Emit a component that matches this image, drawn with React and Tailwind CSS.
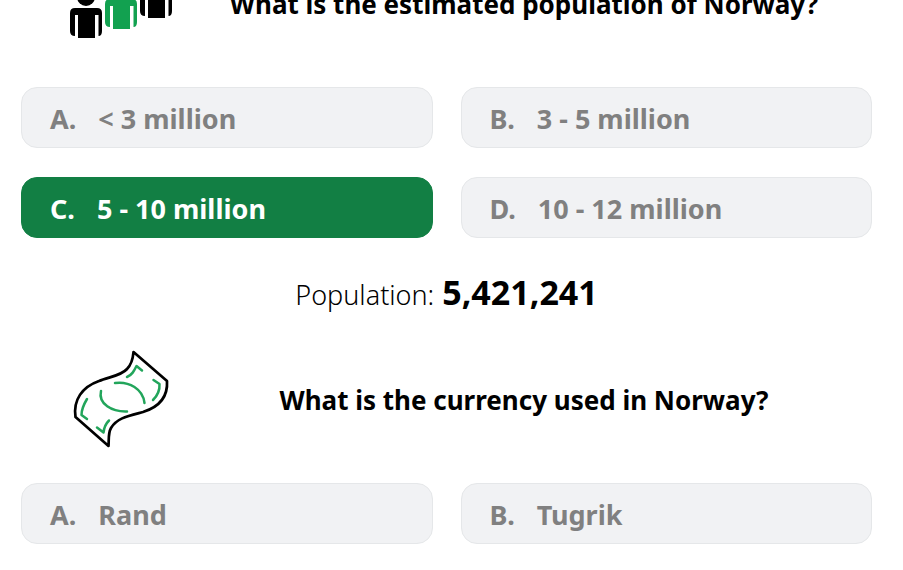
function Person({ x, y, color }) {
  return (
    <g transform={`translate(${x} ${y})`} fill={color}>
      <circle cx="16" cy="-11" r="9" />
      <path d="M5 0H27Q32 0 32 5V23Q32 28 28.500 28V7H25V30H8V7H5V28Q0 28 0 23V5Q0 0 5 0Z" />
    </g>
  );
}

function PeopleIcon() {
  return (
    <svg viewBox="0 0 104 100" className="h-[100px] w-[104px]" aria-hidden="true">
      <Person x={0} y={54} color="#000000" />
      <Person x={35} y={45} color="#12a150" />
      <Person x={70} y={34} color="#000000" />
    </svg>
  );
}

function BanknoteIcon() {
  return (
    <svg viewBox="0 0 104 100" className="h-[100px] w-[104px]" fill="none" strokeWidth="2.700" strokeLinecap="round" strokeLinejoin="round" aria-hidden="true">
      <path stroke="#000000" d="M63.500 2L97 31C98 47 89 57 73 62C58 66 47 68 41 78C38 83 39 90 38.500 96L5.500 67C3 50 12 37 29 31C38 27 51 26 57 19C62 14 63 8 63.500 2Z" />
      <g stroke="#22a55b" strokeWidth="2.500">
        <path d="M57 27C62 25 64 21 66.500 16L72 20.500" />
        <path d="M83.500 30L89.500 34C90 41 87 46 83 50" />
        <path d="M45 33C59 31 73 39 74.500 53" />
        <path d="M31 41C28 54 42 62 57 61.500" />
        <path d="M17 49C14 54 11.500 60 11.500 65L17 69" />
        <path d="M27 77.500L33.500 82.500C34 78 35.500 74 39 70.500" />
      </g>
    </svg>
  );
}

function Question({ icon, children }) {
  return (
    <div className="flex h-[100px] items-center">
      <div className="flex w-[155px] shrink-0 justify-end pr-[2px]">{icon}</div>
      <h2 className="flex-1 text-center text-[26px] leading-9 font-bold text-black">{children}</h2>
    </div>
  );
}

function Option({ letter, label, selected = false }) {
  const tone = selected
    ? "border-[#127f44] bg-[#127f44] text-white"
    : "border-[#e5e7e9] bg-[#f1f2f4] text-[#808080]";
  return (
    <button
      type="button"
      aria-pressed={selected}
      className={`flex h-[61px] items-center gap-[22px] rounded-2xl border px-7 pt-[3px] text-left text-[27px] leading-9 font-bold ${tone}`}
    >
      <span>{letter}.</span>
      <span>{label}</span>
    </button>
  );
}

export default function App() {
  return (
    <div className="overflow-hidden bg-white font-['Noto_Sans',sans-serif]">
      <main className="-mt-[46px] pr-[31px] pb-[26px] pl-[21px]">
        <section>
          <Question icon={<PeopleIcon />}>What is the estimated population of Norway?</Question>
          <div className="mt-[33px] grid grid-cols-2 gap-x-7 gap-y-[29px]">
            <Option letter="A" label="< 3 million" />
            <Option letter="B" label="3 - 5 million" />
            <Option letter="C" label="5 - 10 million" selected />
            <Option letter="D" label="10 - 12 million" />
          </div>
          <p className="flex h-[112px] items-baseline justify-center gap-2 pt-[30px] text-[27px] leading-12 text-black">
            <span className="font-light">Population:</span>
            <strong className="text-[34px] font-bold">5,421,241</strong>
          </p>
        </section>
        <section>
          <Question icon={<BanknoteIcon />}>What is the currency used in Norway?</Question>
          <div className="mt-[33px] grid grid-cols-2 gap-x-7 gap-y-[29px]">
            <Option letter="A" label="Rand" />
            <Option letter="B" label="Tugrik" />
          </div>
        </section>
      </main>
    </div>
  );
}
